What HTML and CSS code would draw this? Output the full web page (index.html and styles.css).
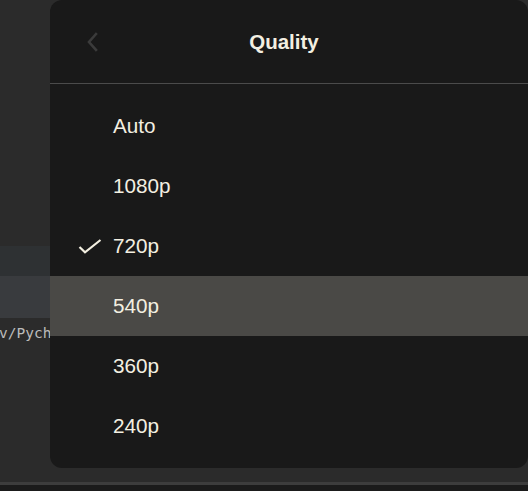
FILE: index.html
```html
<!DOCTYPE html>
<html>
<head>
<meta charset="utf-8">
<link rel="stylesheet" href="styles.css">
</head>
<body>
<div class="backdrop">
  <div class="bd-top"></div>
  <div class="bd-band1"></div>
  <div class="bd-band2"></div>
  <div class="bd-line"><span class="path">v/PycharmProjects</span></div>
  <div class="bd-fill"></div>
  <div class="bd-rule"></div>
  <div class="bd-foot"></div>
</div>

<div class="menu">
  <div class="menu-head">
    <button class="back" aria-label="Back">
      <svg width="20" height="24" viewBox="0 0 20 24"><path d="M13 4 L6 12 L13 20" fill="none" stroke="#3b3b3b" stroke-width="2.6" stroke-linecap="square"/></svg>
    </button>
    <div class="title">Quality</div>
    <div class="spacer"></div>
  </div>
  <ul class="options">
    <li class="opt"><span class="mark"></span><span class="label">Auto</span></li>
    <li class="opt"><span class="mark"></span><span class="label">1080p</span></li>
    <li class="opt selected"><span class="mark"><svg width="24" height="24" viewBox="0 0 24 24"><path d="M1.5 13 L7 18.3 L22.5 6" fill="none" stroke="#f3efe1" stroke-width="2.2"/></svg></span><span class="label">720p</span></li>
    <li class="opt hover"><span class="mark"></span><span class="label">540p</span></li>
    <li class="opt"><span class="mark"></span><span class="label">360p</span></li>
    <li class="opt"><span class="mark"></span><span class="label">240p</span></li>
  </ul>
</div>
</body>
</html>
```

FILE: styles.css
```css
html, body {
  margin: 0;
  padding: 0;
  width: 528px;
  height: 491px;
  overflow: hidden;
  background: #2b2b2b;
}

.backdrop {
  display: flex;
  flex-direction: column;
  height: 491px;
}
.bd-top { height: 246px; background: #2b2b2b; }
.bd-band1 { height: 30px; background: #2e3133; }
.bd-band2 { height: 42px; background: #393b3e; }
.bd-line {
  height: 30px;
  background: #2b2b2b;
  font-family: "DejaVu Sans Mono", "Liberation Mono", monospace;
  font-size: 14.5px;
  line-height: 30px;
  color: #bcbcbc;
  white-space: nowrap;
  overflow: hidden;
}
.path { display: inline-block; margin-left: -1px; }
.bd-fill { flex: 1; background: #2b2b2b; }
.bd-rule { height: 3px; background: #3d3d3d; }
.bd-foot { height: 6px; background: #1b1b1b; }

.menu {
  position: absolute;
  left: 50px;
  top: 0;
  width: 478px;
  height: 468px;
  background: #191919;
  border-radius: 12px;
  box-sizing: border-box;
  font-family: "Liberation Sans", Arial, sans-serif;
  color: #f3efe1;
}

.menu-head {
  height: 83px;
  display: flex;
  align-items: center;
  padding: 0 16px;
  border-bottom: 1px solid #4b4b4b;
}
.back {
  width: 54px;
  height: 40px;
  padding: 0;
  border: 0;
  background: transparent;
  display: flex;
  align-items: center;
  justify-content: center;
}
.back svg { display: block; }
.title {
  flex: 1;
  text-align: center;
  font-weight: bold;
  font-size: 20.5px;
}
.spacer { width: 64px; }

.options {
  list-style: none;
  margin: 0;
  padding: 12px 0 0 0;
}
.opt {
  height: 60px;
  display: flex;
  align-items: center;
  font-size: 20.7px;
}
.opt.hover { background: #4a4946; }
.mark {
  width: 24px;
  height: 24px;
  margin-left: 28px;
  margin-right: 11px;
}
.mark svg { display: block; }
.label { line-height: 1; }
```
